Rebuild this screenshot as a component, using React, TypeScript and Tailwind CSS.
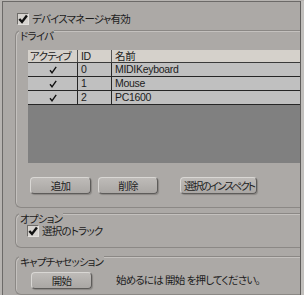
import React from "react";

const rows = [
  { id: "0", name: "MIDIKeyboard" },
  { id: "1", name: "Mouse" },
  { id: "2", name: "PC1600" },
];

function CheckBox() {
  return (
    <span className="flex h-[12px] w-[12px] shrink-0 items-center justify-center border border-t-[#6e6c69] border-l-[#6e6c69] border-b-[#e2e0dd] border-r-[#e2e0dd] bg-[#d6d3cf]">
      <svg width="10" height="10" viewBox="0 0 10 10">
        <path d="M1.3 5 L4 7.9 L8.9 1.6" fill="none" stroke="#111" strokeWidth="2.4" />
      </svg>
    </span>
  );
}

function Tick() {
  return (
    <svg width="8" height="8" viewBox="0 0 8 8">
      <path d="M1 4.3 L3 6.8 L7.2 0.8" fill="none" stroke="#111" strokeWidth="1.4" />
    </svg>
  );
}

function Btn({ label, className }: { label: string; className: string }) {
  return (
    <button
      className={
        "block h-[17px] shrink-0 rounded-[4px] border border-t-[#d9d7d4] border-l-[#d9d7d4] border-b-[#5e5c5a] border-r-[#5e5c5a] bg-gradient-to-b from-[#bebbb8] to-[#aaa7a4] shadow-[1px_1px_1px_#8a8784] leading-[14px] whitespace-nowrap text-[#222] " +
        className
      }
    >
      {label}
    </button>
  );
}

function GroupBox({
  label,
  className,
  children,
}: {
  label: string;
  className: string;
  children: React.ReactNode;
}) {
  return (
    <div
      className={
        "relative rounded-l-[6px] border-t border-l border-b border-[#8b8885] shadow-[inset_1px_1px_0_#c4c1be] " +
        className
      }
    >
      <span className="absolute left-[3px] top-[-1px] bg-[#aca9a6] px-[1px] leading-[12px]">
        {label}
      </span>
      {children}
    </div>
  );
}

export default function App() {
  return (
    <div className="flex h-[295px] w-[304px] overflow-hidden bg-[#b7b4b1] font-['Liberation_Sans','Noto_Sans_CJK_JP',sans-serif] text-[10.5px] leading-[13px] text-[#1c1c1c] [font-feature-settings:'palt'] tracking-[-0.8px]">
      <div className="ml-[2px] mt-[1px] flex h-[294px] w-[298px] flex-col border-l border-t border-[#6c6a68] bg-[#aca9a6] pl-[12px] pt-[11px]">
        <label className="ml-[2px] flex h-[12px] items-center gap-[3px]">
          <CheckBox />
          <span>デバイスマネージャ有効</span>
        </label>

        <GroupBox label="ドライバ" className="mt-[5px] pt-[19px] pb-[13px]">
          <div className="ml-[12px] flex h-[113px] flex-col bg-[#808080] tracking-[-0.3px]">
            <div className="grid h-[13px] grid-cols-[50px_34px_1fr] border-b border-[#3a3a3a] bg-[#d5d1cb] leading-[12px]">
              <div className="border-r border-[#555] pl-[2px] tracking-[-0.8px]">アクティブ</div>
              <div className="border-r border-[#555] pl-[3px]">ID</div>
              <div className="pl-[3px]">名前</div>
            </div>
            {rows.map((r) => (
              <div
                key={r.id}
                className="grid h-[14px] grid-cols-[50px_34px_1fr] border-b border-[#262626] bg-[#c0c0c0] leading-[13px]"
              >
                <div className="flex items-center justify-center border-r border-[#262626]">
                  <Tick />
                </div>
                <div className="border-r border-[#262626] pl-[3px]">{r.id}</div>
                <div className="pl-[3px]">{r.name}</div>
              </div>
            ))}
          </div>

          <div className="ml-[14px] mt-[14px] flex h-[17px]">
            <Btn label="追加" className="w-[61px]" />
            <Btn label="削除" className="ml-[7px] w-[60px]" />
            <Btn label="選択のインスペクト" className="ml-[22px] w-[77px] pl-[3px] text-left tracking-[-1.8px]" />
          </div>
        </GroupBox>

        <GroupBox label="オプション" className="mt-[5px] pt-[11px] pb-[10px]">
          <label className="ml-[11px] flex h-[12px] items-center gap-[3px]">
            <CheckBox />
            <span>選択のトラック</span>
          </label>
        </GroupBox>

        <GroupBox label="キャプチャセッション" className="mt-[8px] h-[60px] pt-[15px]">
          <div className="ml-[15px] flex h-[17px] items-center">
            <Btn label="開始" className="w-[61px]" />
            <span className="ml-[24px]">始めるには 開始 を押してください。</span>
          </div>
        </GroupBox>
      </div>
      <div className="mt-[1px] h-[294px] w-[4px] border-l border-[#5f5d5b] bg-[#c2c0bd]" />
    </div>
  );
}
